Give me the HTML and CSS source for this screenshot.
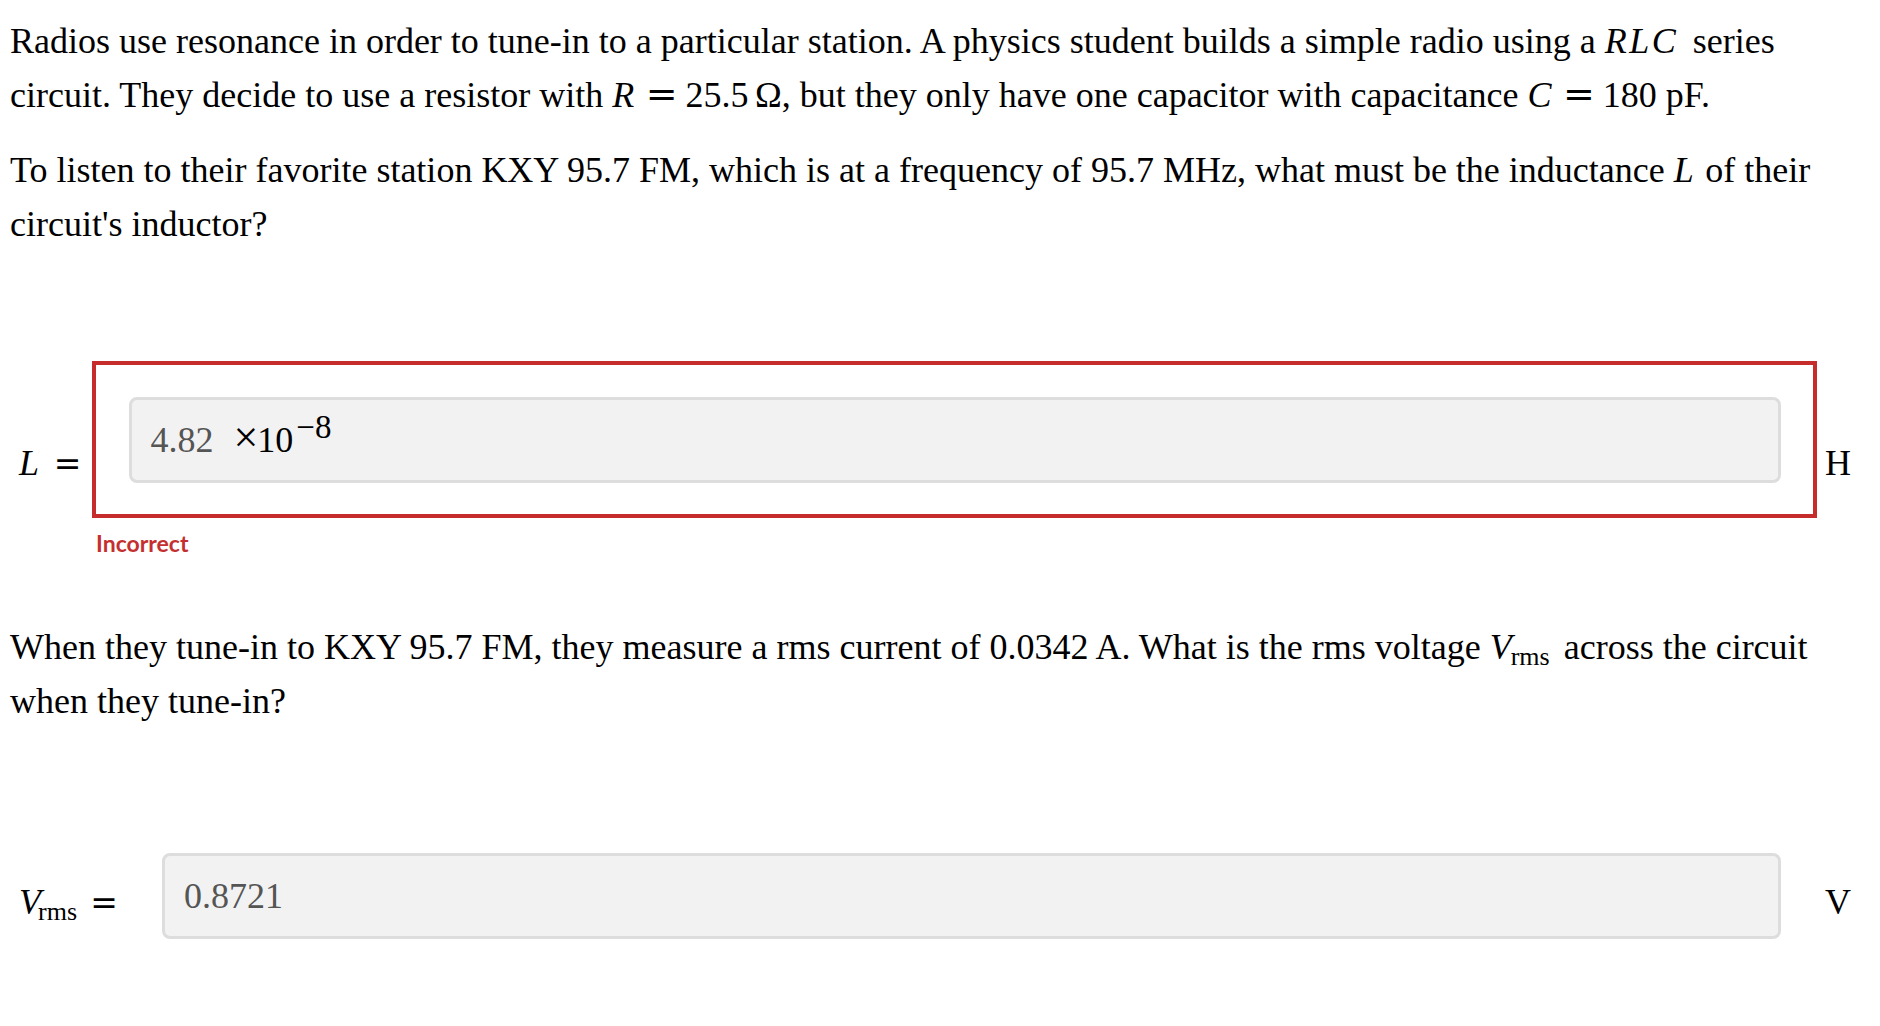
FILE: index.html
```html
<!DOCTYPE html>
<html lang="en">
<head>
<meta charset="utf-8">
<title>RLC radio resonance</title>
<link rel="stylesheet" href="styles.css">
</head>
<body>
<div class="page">
  <p class="q q-first">Radios use resonance in order to tune-in to a particular station. A physics student builds a simple radio using a <span class="mi mi-rlc">RLC</span> series circuit. They decide to use a resistor with <span class="m"><span class="mi">R</span><span class="rel">=</span>25.5<span class="th"></span>Ω</span>, but they only have one capacitor with capacitance <span class="m"><span class="mi">C</span><span class="rel">=</span>180 pF</span>.</p>
  <p class="q q-before-ans">To listen to their favorite station KXY 95.7 FM, which is at a frequency of 95.7 MHz, what must be the inductance <span class="mi">L</span> of their circuit's inductor?</p>

  <div class="ans ans-graded">
    <div class="lbl"><span class="mi mi-l">L</span><span class="eq">=</span></div>
    <div class="field">
      <div class="box box-bad">
        <div class="inp"><span class="val">4.82</span><span class="times"><span class="x">×</span>10<span class="sup">−8</span></span></div>
      </div>
      <div class="fb">Incorrect</div>
    </div>
    <div class="unit">H</div>
  </div>

  <p class="q q-before-ans2">When they tune-in to KXY 95.7 FM, they measure a rms current of 0.0342 A. What is the rms voltage <span class="m"><span class="mi mi-vt">V</span><span class="sub sub-t">rms</span></span> across the circuit when they tune-in?</p>

  <div class="ans ans-plain">
    <div class="lbl"><span class="mi mi-v">V</span><span class="sub">rms</span><span class="eq eq-v">=</span></div>
    <div class="field field-plain">
      <div class="box">
        <div class="inp"><span class="val">0.8721</span></div>
      </div>
    </div>
    <div class="unit">V</div>
  </div>
</div>
</body>
</html>
```
FILE: styles.css
```css
html, body {
  margin: 0;
  padding: 0;
  background: #ffffff;
}

.page {
  padding: 14px 10px 0 10px;
  font-family: "Liberation Serif", "Times New Roman", serif;
  font-size: 36px;
  line-height: 54px;
  color: #000000;
}

.q {
  margin: 0 0 21px 0;
}

.q-before-ans {
  margin-bottom: 110px;
}

.q-before-ans2 {
  margin-bottom: 89px;
}

.mi {
  font-style: italic;
  letter-spacing: 0.07em;
}

.mi-rlc {
  padding-right: 0.15em;
}

.m {
  white-space: nowrap;
}

.rel {
  display: inline-block;
  margin: 0 8px 0 9px;
  font-family: "DejaVu Serif", "Liberation Serif", serif;
  font-size: 38px;
  line-height: 1;
}

.th {
  display: inline-block;
  width: 0.18em;
}

.sub {
  font-size: 26px;
  line-height: 0;
  vertical-align: -6px;
  letter-spacing: 0;
}

.mi-vt {
  letter-spacing: 0;
  margin-right: -1px;
}

.sub-t {
  padding-right: 5px;
}

/* answer rows */
.ans {
  display: flex;
  align-items: center;
}

.ans-graded {
  margin-bottom: 55px;
}

.lbl {
  padding-left: 9px;
  white-space: nowrap;
  font-size: 36px;
}

.lbl .mi {
  letter-spacing: 0;
}

.mi-l {
  padding-right: 4.5px;
}

.mi-v {
  margin-right: -3px;
}

.eq {
  display: inline-block;
  width: 28px;
  text-align: center;
  margin: 0 10px;
  font-family: "DejaVu Serif", "Liberation Serif", serif;
  font-size: 33px;
  line-height: 1;
}

.eq-v {
  margin: 0 7px 0 13px;
}

.field {
  flex: 1;
  min-width: 0;
}

.field-plain {
  padding-bottom: 12px;
}

.box {
  border: 4px solid transparent;
  padding: 32px 32px 31px 33px;
}

.box-bad {
  border-color: #c62c2c;
}

.inp {
  box-sizing: border-box;
  height: 86px;
  border: 3px solid #dddddd;
  border-radius: 8px;
  background: #f2f2f2;
  padding-left: 19px;
  display: flex;
  align-items: center;
  font-size: 36px;
  line-height: 40px;
  color: #555555;
}

.times {
  color: #000000;
  margin-left: 20px;
}

.x {
  font-size: 44px;
  line-height: 0;
  margin-right: -1px;
}

.sup {
  font-size: 33px;
  line-height: 0;
  vertical-align: 14px;
  margin-left: 3px;
}

.fb {
  font-family: "Lato", "Open Sans", sans-serif;
  font-weight: 700;
  font-size: 23px;
  line-height: 43px;
  padding: 4px 0 0 4.5px;
  color: #c4302f;
}

.unit {
  margin: 0 19px 0 8px;
  font-size: 36px;
}
```
